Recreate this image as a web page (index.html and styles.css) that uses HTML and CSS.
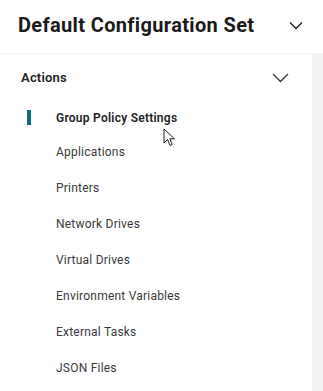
FILE: index.html
```html
<!DOCTYPE html>
<html>
<head>
<meta charset="utf-8">
<link rel="stylesheet" href="styles.css">
</head>
<body>
<div class="page">
  <header class="head">
    <h1 class="title">Default Configuration Set</h1>
    <svg class="chev-sm" width="14" height="9" viewBox="0 0 14 9"><path d="M1 1.5 L7 7.5 L13 1.5" fill="none" stroke="#222" stroke-width="1.4"/></svg>
  </header>
  <div class="body">
    <div class="panel">
      <div class="section">
        <span class="section-label">Actions</span>
        <svg class="chev" width="17" height="10" viewBox="0 0 17 10"><path d="M1 1 L8.5 8.5 L16 1" fill="none" stroke="#333" stroke-width="1.3"/></svg>
      </div>
      <ul class="nav">
        <li class="item active"><span class="bar"></span>Group Policy Settings</li>
        <li class="item">Applications</li>
        <li class="item">Printers</li>
        <li class="item">Network Drives</li>
        <li class="item">Virtual Drives</li>
        <li class="item">Environment Variables</li>
        <li class="item">External Tasks</li>
        <li class="item">JSON Files</li>
      </ul>
      <svg class="cursor" width="14" height="20" viewBox="0 0 14 20"><path d="M1 1 L1 15 L4.5 11.5 L7 17.5 L9.2 16.5 L6.8 10.8 L11.5 10.8 Z" fill="#fff" stroke="#222" stroke-width="1"/></svg>
    </div>
    <div class="strip"></div>
  </div>
</div>
</body>
</html>
```
FILE: styles.css
```css
* { box-sizing: border-box; }
html, body { margin: 0; padding: 0; background: #fff; }
body { font-family: Roboto, "Noto Sans", sans-serif; color: #333; }
.page { width: 323px; height: 391px; display: flex; flex-direction: column; overflow: hidden; }
.head { height: 53px; display: flex; align-items: center; justify-content: space-between; padding: 0 20px 4px 18px; }
.title { margin: 0; font-size: 20px; font-weight: 700; color: #1a1a1a; letter-spacing: 0.35px; }
.chev-sm { margin-top: 2px; }
.body { flex: 1; display: flex; border-top: 1px solid #f3f3f3; }
.panel { flex: 1; position: relative; }
.strip { width: 11px; background: #f2f2f2; }
.section { display: flex; align-items: center; justify-content: space-between; height: 47px; padding: 0 23px 0 21px; }
.section-label { font-size: 13px; font-weight: 600; color: #222; letter-spacing: 0.2px; }
.nav { list-style: none; margin: 0; padding: 0; }
.item { position: relative; height: 36px; display: flex; align-items: center; padding-left: 56px; font-size: 12px; color: #3a3a3a; letter-spacing: 0.22px; }
.item.active { height: 33px; font-weight: 600; color: #222; letter-spacing: 0.25px; }
.bar { position: absolute; left: 27px; top: 9px; width: 4px; height: 15px; background: #0f6b7e; }
.cursor { position: absolute; left: 163px; top: 74px; }
```
